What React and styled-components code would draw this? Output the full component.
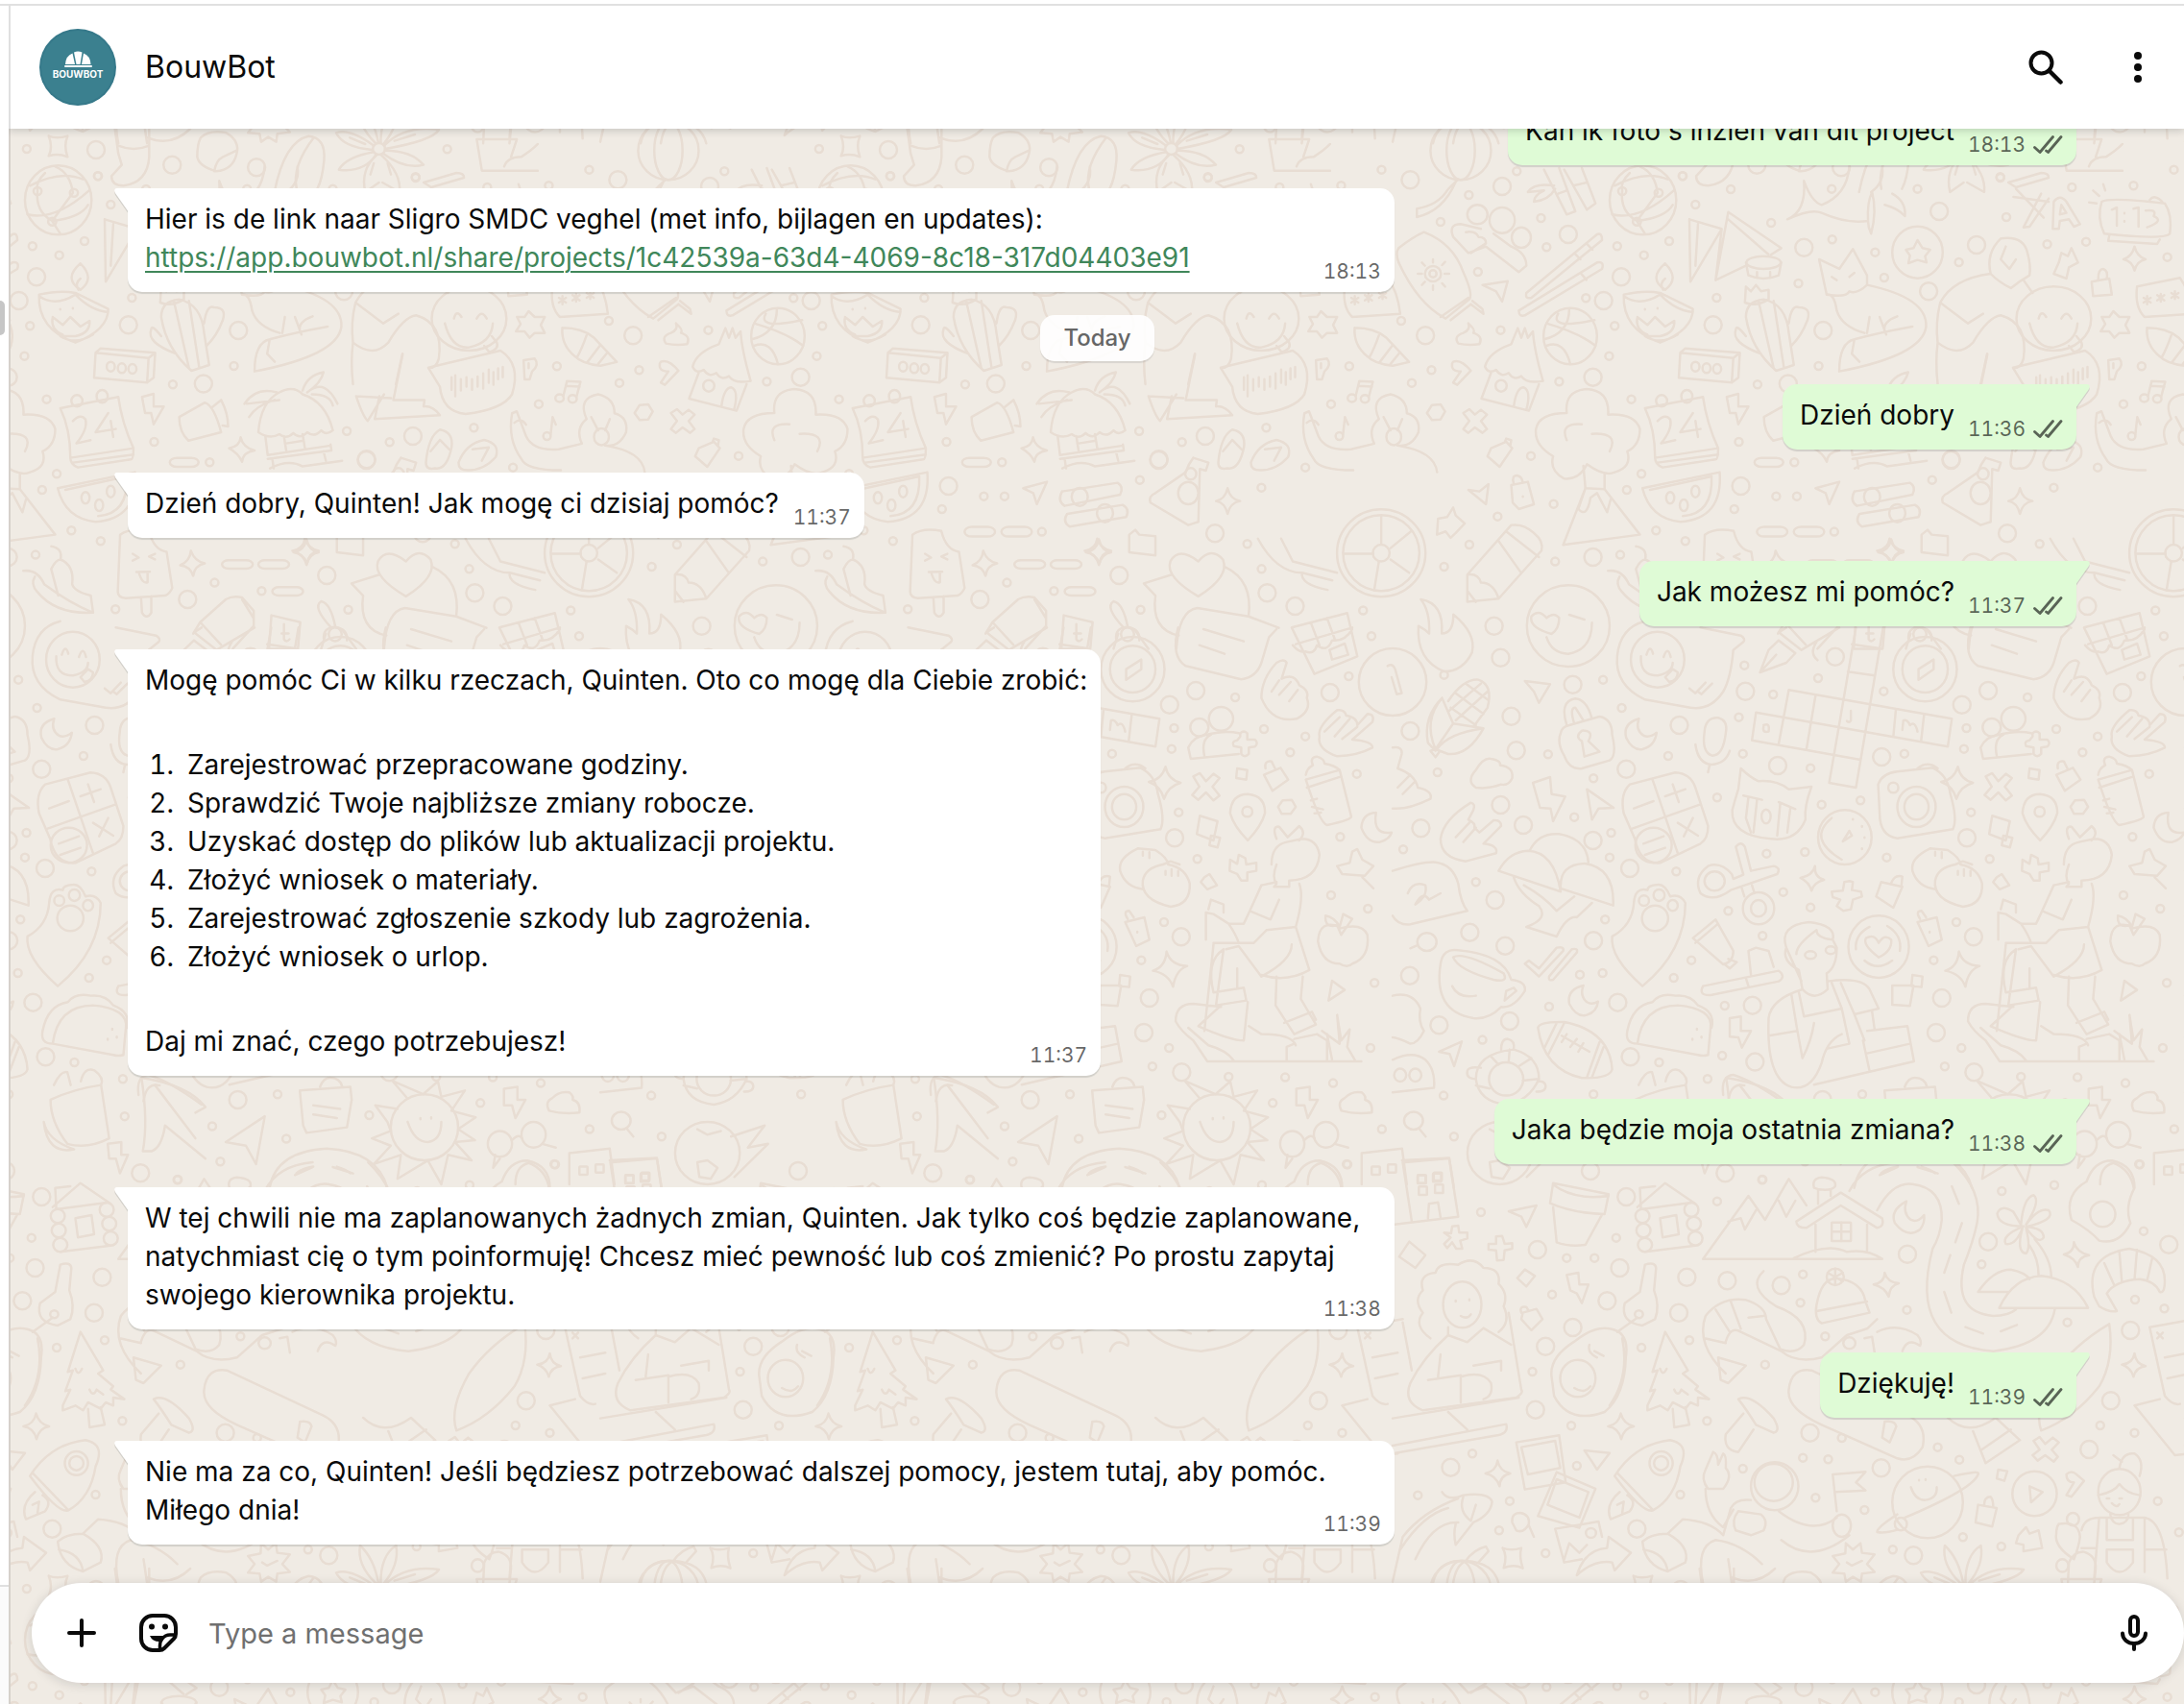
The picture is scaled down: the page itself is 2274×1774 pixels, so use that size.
import React from "react";
import styled, { createGlobalStyle, css } from "styled-components";

const GlobalStyle = createGlobalStyle`
  *, *::before, *::after { box-sizing: border-box; }
  body {
    margin: 0;
    background: #ffffff;
    color: #0a0a0a;
    font-family: Inter, "Noto Sans", sans-serif;
  }
  button, input { font: inherit; color: inherit; }
`;

/* ---------- page frame ---------- */

const Page = styled.div`
  display: flex;
  flex-direction: column;
  height: 100vh;
  overflow: hidden;
`;

const TopEdge = styled.div`
  flex: none;
  height: 6px;
  border-bottom: 2px solid #e0e0e0;
`;

const Columns = styled.div`
  flex: 1;
  min-height: 0;
  display: flex;
`;

const Sidebar = styled.aside`
  flex: none;
  width: 9px;
  display: flex;
  flex-direction: column;
  justify-content: space-between;
  padding-top: 307px;
`;

const ScrollThumb = styled.div`
  width: 5px;
  height: 36px;
  border-radius: 0 5px 5px 0;
  background: #c6c6c6;
`;

const SidebarFooter = styled.div`
  height: 124px;
  border-top: 2px solid #e0e0e0;
  background: #fbfbfb;
`;

const Chat = styled.main`
  position: relative;
  flex: 1;
  min-width: 0;
  display: flex;
  flex-direction: column;
  border-left: 2px solid #d6d1cb;
  background: #f0ebe4;
`;

const Wallpaper = styled.svg`
  position: absolute;
  inset: 0;
  width: 100%;
  height: 100%;
  fill: none;
  stroke: #e8ddd3;
  stroke-width: 2.5;
  stroke-linecap: round;
  stroke-linejoin: round;

  path, ellipse, rect { vector-effect: non-scaling-stroke; }
`;

/* ---------- header ---------- */

const Header = styled.header`
  position: relative;
  z-index: 2;
  flex: none;
  height: 128px;
  display: flex;
  align-items: center;
  gap: 30px;
  margin-left: -2px;
  padding: 0 8px 0 30px;
  border-left: 2px solid #e0e0e0;
  background: #ffffff;
  box-shadow: 0 2px 8px rgba(11, 20, 26, 0.18);
  clip-path: inset(0 0 -16px 0);
`;

const Title = styled.h1`
  flex: 1;
  margin: 0;
  font-size: 32px;
  line-height: 40px;
  font-weight: 400;
`;

const Actions = styled.div`
  display: flex;
  gap: 16px;
`;

const IconButton = styled.button`
  flex: none;
  width: 80px;
  height: 80px;
  display: flex;
  align-items: center;
  justify-content: center;
  padding: 0;
  border: 0;
  border-radius: 50%;
  background: transparent;
`;

const AvatarText = styled.text`
  fill: #ffffff;
  font-size: 10px;
  font-weight: 700;
  text-anchor: middle;
`;

/* ---------- conversation ---------- */

const Conversation = styled.section`
  position: relative;
  flex: 1;
  min-height: 0;
  overflow: hidden;
  display: flex;
  flex-direction: column;
  justify-content: flex-end;
  gap: 24px;
  padding: 0 112px 40px 122px;
`;

const DayPill = styled.div`
  flex: none;
  align-self: center;
  height: 48px;
  margin-right: -10px;
  margin-left: -20px;
  padding: 0 24px;
  border-radius: 15px;
  background: rgba(255, 255, 255, 0.9);
  box-shadow: 0 2px 1px rgba(11, 20, 26, 0.1);
  color: #666666;
  font-size: 24px;
  line-height: 48px;
  font-weight: 500;
`;

const Bubble = styled.article`
  position: relative;
  flex: none;
  max-width: 65%;
  padding: 12px 14px 16px 18px;
  border-radius: 15px;
  font-size: 28px;
  line-height: 40px;
  box-shadow: 0 2px 1px rgba(11, 20, 26, 0.13);
  ${(p) =>
    p.$out
      ? css`
          align-self: flex-end;
          background: #dffbd6;
          border-top-right-radius: 0;
        `
      : css`
          align-self: flex-start;
          background: #ffffff;
          border-top-left-radius: 0;
        `}
`;

const TailShape = styled.svg`
  position: absolute;
  top: 0;
  width: 14px;
  height: 26px;
  ${(p) =>
    p.$out
      ? css`
          left: 100%;
          fill: #dffbd6;
          transform: scaleX(-1);
        `
      : css`
          right: 100%;
          fill: #ffffff;
        `}
`;

const Line = styled.p`
  margin: 0;
`;

const MetaSpace = styled.span`
  display: inline-block;
  width: ${(p) => (p.$out ? 113 : 75)}px;
`;

const Meta = styled.footer`
  display: flex;
  justify-content: flex-end;
  align-items: center;
  gap: 8px;
  height: 30px;
  margin: -20px 0 -10px;
  color: rgba(0, 0, 0, 0.6);
  font-size: 21px;
  line-height: 30px;
  font-variant-numeric: tabular-nums;
`;

const Link = styled.a`
  color: #40875a;
  text-decoration: underline;
  text-decoration-thickness: 2px;
  text-underline-offset: 4px;
`;

const Steps = styled.ol`
  margin: 48px 0;
  padding: 0;
  list-style: none;
  counter-reset: step;
`;

const Step = styled.li`
  display: flex;
  gap: 14px;
  counter-increment: step;

  &::before {
    content: counter(step) ".";
    width: 30px;
    text-align: right;
    font-variant-numeric: tabular-nums;
  }
`;

/* ---------- composer ---------- */

const Composer = styled.form`
  position: relative;
  z-index: 1;
  flex: none;
  height: 104px;
  margin: 0 0 22px 22px;
  padding: 0 12px;
  display: flex;
  align-items: center;
  border-radius: 52px;
  background: #ffffff;
  box-shadow: 0 2px 12px rgba(11, 20, 26, 0.14);
`;

const MessageInput = styled.input`
  flex: 1;
  min-width: 0;
  height: 60px;
  padding: 0 12px;
  border: 0;
  outline: 0;
  background: transparent;
  font-size: 29px;

  &::placeholder { color: #707070; opacity: 1; }
`;

/* ---------- icons ---------- */

const Avatar = () => (
  <svg width="80" height="80" viewBox="0 0 80 80" role="img" aria-label="BouwBot logo">
    <circle cx="40" cy="40" r="40" fill="#36798a" />
    <circle cx="40" cy="40" r="38" fill="#3b808f" />
    <g fill="#ffffff">
      <path d="M27 37Q27.500 28 34.500 25.500L37 37Z" />
      <path d="M36 24.500Q40 22.500 44.500 24.500L42.500 37H38.500Z" />
      <path d="M53.500 37Q53 28 46 25.500L44 37Z" />
      <rect x="26" y="38" width="29" height="2" rx="1" />
    </g>
    <AvatarText x="40" y="51">BOUWBOT</AvatarText>
  </svg>
);

const SearchIcon = () => (
  <svg width="36" height="36" viewBox="0 0 36 36" fill="none" stroke="#0a0a0a" strokeWidth="4">
    <circle cx="13.500" cy="13.500" r="11" />
    <path d="M21.500 21.500L33.500 33.500" strokeWidth="4.500" strokeLinecap="round" />
  </svg>
);

const MenuIcon = () => (
  <svg width="8" height="32" viewBox="0 0 8 32" fill="#0a0a0a">
    <circle cx="4" cy="4" r="4" />
    <circle cx="4" cy="16" r="4" />
    <circle cx="4" cy="28" r="4" />
  </svg>
);

const PlusIcon = () => (
  <svg width="30" height="30" viewBox="0 0 30 30" stroke="#0a0a0a" strokeWidth="4" strokeLinecap="round">
    <path d="M15 2V28M2 15H28" />
  </svg>
);

const StickerIcon = () => (
  <svg width="40" height="40" viewBox="0 0 40 40" fill="none" stroke="#0a0a0a" strokeWidth="4" strokeLinejoin="round">
    <path d="M14 2H26A12 12 0 0 1 38 14V21Q38 24 36 26L26 36Q24 38 21 38H14A12 12 0 0 1 2 26V14A12 12 0 0 1 14 2Z" />
    <path d="M38 22H32Q27 22 24 26Q21.500 29 21.500 33V38" strokeWidth="3.500" />
    <path d="M11 23H26L21 29Q13.500 29 11 23Z" fill="#0a0a0a" stroke="none" />
    <circle cx="13" cy="13.500" r="3" fill="#0a0a0a" stroke="none" />
    <circle cx="27" cy="13.500" r="3" fill="#0a0a0a" stroke="none" />
  </svg>
);

const MicIcon = () => (
  <svg width="28" height="38" viewBox="0 0 28 38" fill="none" stroke="#0a0a0a" strokeWidth="4">
    <rect x="10" y="2" width="8" height="20" rx="4" />
    <path d="M2 19.500A12 10.500 0 0 0 26 19.500" strokeLinecap="round" />
    <path d="M14 30V36" strokeLinecap="round" />
  </svg>
);

const ChecksIcon = () => (
  <svg width="31" height="20" viewBox="0 0 31 20" fill="none" stroke="currentColor" strokeWidth="2.800" strokeLinecap="round" strokeLinejoin="round" role="img" aria-label="Delivered">
    <path d="M1.500 12.500L7 17.500L20.500 1.500" />
    <path d="M13.500 16L15.500 17.500L29 1.500" />
  </svg>
);

const Tail = ({ out }) => (
  <TailShape $out={out} viewBox="0 0 14 26" aria-hidden="true">
    <path d="M14 3V25.500L1 7Q-1 3 3 2Z" fill="rgba(11,20,26,0.13)" />
    <path d="M14 0V23.500L1 5Q-1 0 3 0Z" />
  </TailShape>
);

/* ---------- wallpaper drawings ----------
   Each sheet has its own scale; `big` and `small` are the loose rings,
   `rings` are ellipses that belong to a drawing: [cx, cy, rx, ry]. */

const sheets = [
  {
    at: "translate(1450 130) scale(.5255 .3333)",
    sx: 0.5255,
    sy: 0.3333,
    big: [[35,172],[217,192],[348,342],[453,475],[418,549],[65,658],[397,788],[815,383],[635,625],[853,642],[1062,520],[1157,375],[1083,270],[1218,1276],[690,1128],[397,1350],[1107,1045]],
    small: [[246,145],[151,219],[95,303],[294,291],[305,382],[169,459],[383,541],[17,612],[214,641],[77,766],[38,806],[330,802],[429,722],[440,628],[445,379],[548,363],[600,249],[575,160],[670,201],[498,407],[750,306],[870,200],[871,358],[956,398],[1040,200],[1204,163],[1216,288],[1297,373],[1374,365],[1346,195],[1468,190],[1535,413],[1548,140],[1122,429],[974,477],[804,495],[642,540],[844,753],[723,811],[473,857],[686,990],[796,1054],[493,1090],[464,1140],[319,1184],[274,1034],[208,1223],[152,1311],[102,1380],[322,1364],[522,1267],[580,1300],[451,1343],[677,1200],[760,1160],[801,1160],[875,1271],[1069,1109],[1310,1133],[1282,1309],[1397,1070],[1448,872],[1484,754]],
    rings: [[135,80,60,92],[135,80,28,92],[168,280,20,30],[217,298,25,40],[255,352,19,32],[80,465,16,24],[80,465,7,11],[496,235,66,108],[735,430,34,20],[1040,398,50,81],[1310,605,74,100],[600,755,8,15],[622,760,8,15],[643,762,8,15],[352,660,53,88],[215,815,11,18],[533,862,11,18],[583,848,11,20],[550,1165,8,18],[577,1188,8,18],[600,1145,8,18],[950,1162,16,28],[1000,1213,16,28],[1165,1150,20,35],[1170,1090,11,18],[484,302,8,12],[455,207,8,12],[527,212,8,12]],
    boxes: [[717,1040,57,28],[722,1256,60,30],[795,1256,60,30]],
    lines: [
      "M130 170Q110 200 108 205Q90 250 48 262V288Q100 270 125 178",
      "M120 350Q110 310 135 310L175 325M120 350L150 400L185 380L250 460L265 440Q265 400 235 380L200 340M145 335Q165 330 170 350Q185 350 185 370L155 400",
      "M12 385Q40 350 62 335Q120 370 140 460Q160 530 152 545L105 605Q50 560 12 430Q5 400 12 385ZM95 600L150 540M115 610L155 560L180 590L178 575L158 550",
      "M80 420V430M80 502V515M50 465H58M103 465H112M58 430L64 440M98 495L104 505M58 500L64 490M98 438L104 428",
      "M265 525L405 342Q415 335 415 360L275 540Q262 545 265 525ZM250 580L405 430Q420 425 415 450L262 595Q250 600 250 580ZM360 400L372 420M384 370L396 390M372 462L384 484",
      "M300 140L345 280L362 270L330 135M340 140L385 265L402 245L375 135M320 190Q280 180 268 210L300 205Q280 220 280 240Q310 235 322 200M328 215L345 205M358 190L385 180",
      "M440 190Q500 140 545 170M435 280Q490 300 557 205M455 205Q450 270 484 300Q540 290 555 250M470 150Q450 180 455 205M484 300L500 340M525 212Q520 150 490 130M525 212L484 300",
      "M588 295L590 490L652 325L588 295M605 310L600 440M640 485L665 272L770 385L750 405M640 485L700 440M652 325L640 485M665 295L745 405",
      "M700 430L705 470Q735 490 765 470L770 430M722 460V478M748 460V478",
      "M782 295Q820 270 815 175Q830 240 850 250Q900 220 905 130M782 295Q830 260 850 275Q900 310 942 300Q940 240 950 210Q960 270 948 340Q942 320 942 300M975 250Q1000 260 1015 285Q1018 240 990 215M948 210Q975 180 970 130",
      "M1040 360L1050 385L1065 390L1055 410L1058 430L1040 422L1022 432L1025 408L1017 390L1032 385Z",
      "M845 420L860 530Q875 525 880 580Q890 630 935 650M845 420L885 450L912 388L940 470L940 500Q1060 540 1057 630Q1050 720 885 770Q885 680 915 670Q960 650 1030 630M860 530Q900 540 905 520Q920 530 940 500M945 600L940 650M965 600L978 655M1000 598Q970 615 975 645M870 475L880 485M905 475L915 462M915 670L910 715L925 740",
      "M1085 555Q1110 480 1185 465Q1175 400 1205 355Q1250 345 1258 400Q1265 440 1262 470Q1240 490 1225 510Q1200 490 1185 465M1250 485L1268 525M1085 555L1140 620L1170 590M1085 555Q1075 620 1080 680Q1120 730 1150 680Q1180 600 1205 595Q1260 620 1250 730Q1245 760 1230 760M1080 680Q1075 740 1080 810M1178 715L1165 810M1215 380L1205 420L1222 450L1235 420",
      "M1280 605Q1285 575 1295 600M1325 605Q1335 575 1345 605M1262 620Q1275 700 1310 695Q1355 680 1357 620M1340 690L1350 710Q1370 700 1365 680L1355 660",
      "M458 530Q500 515 530 525L595 575Q595 640 530 680Q455 640 458 530ZM458 535Q490 570 530 530Q560 580 595 585M540 433Q570 480 540 515Q505 480 540 433M540 480Q528 495 536 515M485 600Q480 640 505 655M485 600L505 625L520 600L540 630L558 612Q560 650 530 660H505M500 660Q530 690 565 655M500 575V577M525 572V574",
      "M700 600Q700 550 735 545Q780 560 785 650L795 750L760 768Q710 700 700 600M785 620Q790 560 805 570Q830 570 822 610Q810 660 790 690M700 660Q680 620 680 640Q670 680 730 715M700 505L698 555Q720 570 745 545L745 515L730 520L720 500L710 520ZM725 550L755 760M755 550L775 755",
      "M570 712L580 698L688 712L685 790L672 805L567 790ZM570 712L675 728L688 712M675 728L672 805",
      "M305 620Q370 650 402 690M328 590Q310 640 400 610M300 670Q350 650 350 575M305 690Q340 670 352 747",
      "M183 755Q190 710 235 685L248 635L255 665L262 635L268 665L278 645Q280 700 298 800M183 755Q190 780 205 765Q215 790 230 775Q240 800 255 785Q265 810 298 800M195 775L176 855L270 893L290 810M240 880Q245 820 260 820Q275 830 265 890",
      "M150 620Q165 640 160 650Q180 660 172 685Q150 690 130 683Q120 660 140 650Q155 640 150 620",
      "M178 500L228 488L217 552L205 520Z",
      "M120 740Q135 730 155 768L128 812L120 805L135 770Q115 770 118 745Z",
      "M78 875L95 873L104 895L95 920L78 922L68 900Z",
      "M140 900L152 888L163 905L175 890L187 905L175 925L187 950L178 962L163 945L150 962L140 950L152 925Z",
      "M195 1010L225 990L237 1010L212 1068L188 1035ZM222 992L225 980L235 985L233 1003",
      "M235 1125L268 1115L280 1185L250 1200L238 1180ZM240 1120Q235 1095 247 1095Q258 1100 257 1118M258 1160V1162",
      "M150 1140L172 1145L190 1122L185 1185Z",
      "M90 1230L108 1225L120 1195L125 1220L143 1245L125 1275L115 1290L105 1270L88 1280Z",
      "M345 900Q340 830 385 825Q430 830 427 905Q480 900 490 950Q490 1000 465 1020Q475 1070 440 1085Q420 1100 385 1060Q370 1110 340 1105Q310 1080 318 1035Q280 1000 284 950Q290 900 345 900M345 985Q330 930 375 935M430 1020Q450 960 395 965M378 1065L382 1135L420 1138V1090",
      "M382 1135L338 1312L490 1280L420 1138M382 1135L368 1200Q385 1230 392 1165L405 1150L425 1210L432 1170",
      "M500 885L615 850Q622 930 645 1010Q645 1045 640 1045L535 1070Q520 1060 520 1040Q520 950 500 885M520 1040L645 1010M525 1055L645 1030",
      "M525 925Q540 900 550 920Q555 950 532 995L560 985M595 900L570 960L610 950M600 925L605 975",
      "M495 1135L648 1085Q655 1230 570 1240Q510 1230 495 1135ZM510 1140L632 1098Q635 1215 575 1222",
      "M662 850L685 840V880H705L685 935L680 900H668Z",
      "M838 1135L885 1115L865 1185L858 1150Z",
      "M915 1145L1025 1118Q1038 1130 1030 1155L920 1190Q905 1175 915 1145M925 1215L1035 1187Q1050 1200 1042 1225L930 1255Q915 1240 925 1215",
      "M1175 1040L1205 1055L1200 1080L1188 1075L1185 1240L1165 1250L1090 1180Q1085 1160 1100 1150L1160 1085Q1165 1060 1175 1040",
      "M1243 1135Q1248 1170 1268 1175Q1248 1180 1243 1215Q1238 1180 1220 1175Q1238 1170 1243 1135",
      "M988 1295Q993 1330 1012 1335Q993 1340 988 1375Q983 1340 962 1335Q983 1330 988 1295",
      "M1470 380Q1475 412 1492 420Q1475 425 1470 455Q1465 425 1448 420Q1465 412 1470 380",
      "M1048 1280L1060 1265L1068 1280L1100 1285V1345L1048 1335Z",
      "M148 1405L235 1250Q260 1245 280 1275Q300 1300 295 1330L210 1480L148 1490ZM148 1405Q170 1400 175 1430Q200 1430 210 1480M225 1270L290 1350M210 1300L255 1400M148 1455L165 1490",
      "M1405 240Q1420 225 1530 245Q1545 280 1540 340Q1530 360 1410 340Q1395 290 1405 240M1420 345L1418 362L1515 372L1520 358M1395 245L1380 242M1400 222L1388 205M1412 205L1408 185M1500 235Q1510 215 1525 240",
      "M1425 265L1435 258V315M1450 275V277M1450 300V302M1468 262L1478 258V318M1492 268Q1515 262 1508 285Q1530 300 1495 320",
      "M1220 180L1285 150Q1300 150 1300 165L1235 195ZM1230 225L1300 240M1285 215L1250 320L1262 318L1300 230M1235 200L1290 290",
      "M1308 325L1310 240Q1322 215 1335 240L1362 310L1350 318L1340 295L1322 300L1320 325ZM1325 250L1335 275L1322 280Z",
      "M1385 490L1420 480L1425 530L1388 535ZM1398 483Q1398 450 1408 450Q1418 455 1415 480",
      "M1320 430L1325 400L1338 410L1345 385L1358 430L1340 445L1335 480L1310 465Z",
      "M1475 505L1560 478Q1580 520 1585 590L1490 600Q1470 570 1475 505M1495 535V560M1488 540L1502 555M1502 540L1488 555M1522 528V552M1515 532L1529 548M1529 532L1515 548M1550 520V544M1543 525L1557 540M1557 525L1543 540",
      "M1405 600L1420 600L1428 582L1440 600L1460 600L1452 625L1460 650L1440 650L1430 665L1420 645L1403 645L1412 622Z",
      "M1418 735L1440 730Q1450 750 1435 770L1430 795H1420ZM1428 745V760",
    ],
  },
  {
    at: "translate(1450 640) scale(.5255 .3333)",
    sx: 0.5255,
    sy: 0.3333,
    big: [[201,35],[214,134],[357,218],[235,317],[35,363],[245,424],[463,482],[214,594],[259,657],[56,667],[397,705],[470,792],[203,891],[153,992],[223,1034],[398,1018],[34,1127],[92,1282],[232,1269],[446,1211],[471,1381],[713,1220],[718,1397],[699,239],[568,345],[763,471],[969,444],[877,131],[1180,237],[1128,281],[1446,243],[1138,697],[1151,1006],[1088,1197],[1077,1305],[1152,1429]],
    small: [[102,188],[417,203],[454,291],[308,436],[89,492],[398,511],[360,632],[433,681],[430,758],[21,733],[165,835],[546,441],[421,952],[371,1124],[416,1119],[310,1224],[178,1328],[101,1502],[398,1498],[528,1398],[557,1134],[562,802],[643,571],[697,158],[754,249],[686,320],[694,434],[828,479],[843,198],[973,239],[1014,434],[1132,419],[1137,354],[1258,258],[1315,357],[1397,380],[1483,192],[1528,67],[1499,497],[1367,430],[1146,617],[1466,694],[1183,763],[979,758],[927,580],[850,593],[817,741],[741,746],[665,925],[774,866],[828,914],[733,1003],[592,1079],[658,1221],[653,1377],[624,1450],[1072,1079],[1117,960],[1127,1353],[1094,1411],[1245,1443],[1357,1445],[1452,1463],[1526,1353],[1534,1150],[1448,876],[1521,918]],
    rings: [[348,35,82,127],[525,140,53,87],[0,210,67,105],[1055,170,63,101],[1055,170,45,73],[1187,352,18,28],[1230,325,24,37],[517,720,36,55],[740,630,9,22],[896,695,53,85],[1038,600,38,63],[1038,600,24,40],[992,540,10,16],[1282,615,10,16],[520,948,26,40],[528,876,11,18],[498,893,10,16],[555,908,10,17],[638,832,20,30],[725,917,31,50],[725,917,15,26],[68,1022,19,28],[828,1063,11,12],[868,1048,10,12],[963,1037,60,97],[15,1438,12,20],[45,1438,12,20],[225,1450,34,52]],
    lines: [
      "M305 70Q315 120 348 122Q395 110 395 25M315 60Q270 40 275 5Q290 -20 305 10Q320 -10 330 10Q330 45 315 60M380 15L350 0",
      "M610 40L690 65Q700 75 695 85L675 110Q670 200 655 240Q630 300 590 290L500 265Q440 220 445 130Q450 40 500 20M492 130Q490 190 525 190Q555 180 555 150M503 125Q510 90 516 122M537 132Q545 95 551 132M540 195L555 170L565 180Q565 205 548 210ZM588 230L600 245L620 212M605 240L612 248L633 215",
      "M-10 160Q0 150 5 170L18 245L8 248L-2 195",
      "M98 260L120 340L180 355Q150 440 110 435L85 420L75 425L85 445L92 430M98 260Q60 320 70 400L85 425M98 260Q60 330 85 420M120 340L85 420M180 355Q110 370 88 420M110 270Q140 200 170 203Q200 220 188 290L160 350M125 245L180 310M145 215L188 265M115 290L165 345M188 240L125 330M175 215L112 300",
      "M262 207L312 217L290 275L280 240Z",
      "M333 370Q335 350 350 345L410 318Q435 325 435 375Q445 440 430 455L375 480Q350 485 340 440Q325 400 333 370M345 345Q330 270 362 262Q385 265 395 325M360 340Q350 290 362 290L378 330M375 395Q360 380 375 362Q400 360 388 395L410 428L380 443Z",
      "M488 325Q455 340 463 385Q475 425 495 420Q520 410 523 368Q510 385 498 378Q480 360 488 325",
      "M618 365Q620 320 645 322Q665 330 660 370Q655 440 633 440Q612 430 618 365M600 405Q605 465 632 468Q660 465 668 425M628 470L625 492",
      "M728 180L745 110L765 80L798 120L780 150ZM728 180L760 125M765 55L810 110L885 40M765 55L780 40M840 85Q825 120 842 142",
      "M712 392L720 305L1100 412L1108 325L785 235L765 403M712 392L925 452M838 252L820 420M997 298L992 382M1053 312L1047 396M972 40L918 540L865 525L918 40M910 92L965 105M902 178L955 190M735 345Q748 335 745 365Q732 370 735 350M908 300V330Q905 340 900 332M1010 360L1012 330Q1020 325 1025 345Q1035 330 1040 365",
      "M1072 140V170L1042 203V170ZM1022 75Q1020 40 1045 38Q1070 45 1068 80",
      "M1145 40Q1130 130 1160 160L1270 202Q1300 195 1310 150L1325 70L1340 45M1195 45L1275 83M1187 95L1237 122",
      "M1370 40L1480 -5L1500 130L1415 185ZM1378 92L1490 40M1372 95Q1385 120 1398 115Q1415 125 1420 95Q1440 120 1450 80Q1475 85 1490 45M1445 110L1475 90L1482 125L1450 140ZM1408 25L1425 95M1440 10L1455 75",
      "M1310 260Q1310 200 1340 150Q1355 135 1360 150L1350 200Q1375 180 1385 220Q1405 235 1400 260Q1410 300 1380 325Q1330 340 1310 260M1330 240L1345 205M1345 250L1368 210M1365 270L1382 235",
      "M1425 380Q1420 350 1460 298Q1475 295 1478 315Q1500 320 1500 345L1520 310Q1535 310 1530 335L1490 390Q1530 395 1530 415Q1500 440 1460 442Q1420 420 1425 380M1435 365L1465 320M1455 380L1485 325M1470 388L1500 350",
      "M1165 415Q1175 380 1200 375Q1240 360 1265 370M1165 415L1170 450L1265 435M1197 440Q1190 390 1210 375M1268 380V370Q1275 360 1282 370V390H1297Q1305 400 1297 412L1285 415V435Q1277 448 1270 435V415L1255 410Q1250 395 1262 392Z",
      "M1398 515L1465 485L1488 630Q1490 640 1440 657Q1425 650 1398 515M1400 540L1468 505M1398 500Q1400 480 1412 470Q1405 445 1420 443Q1435 450 1435 465Q1455 470 1465 485M1408 580L1420 575M1410 600L1432 608M1415 620L1428 618",
      "M165 485Q180 445 195 450Q215 455 213 470Q240 475 237 510Q230 535 215 530Q190 545 165 540Q145 520 165 485",
      "M278 525L312 507L315 560L342 568L318 645L313 605L292 603Z",
      "M385 545L438 603L408 605L395 640Z",
      "M95 700Q100 640 155 587Q165 590 160 610L150 640Q165 650 162 665L172 680L200 642Q215 640 215 660L180 715Q210 720 205 745L145 770Q95 760 95 700M125 695L155 645M140 710L165 665",
      "M0 415Q20 410 18 435L10 480Q45 500 50 540Q80 550 75 575Q30 610 0 605M10 540L35 500M20 560L45 520",
      "M458 620Q450 560 470 530L560 493Q590 495 600 540L625 660Q625 700 610 715L530 775Q490 780 480 700ZM515 515L565 745M475 668L610 592M497 715L537 692M500 750L540 728M478 605L517 582M540 567L580 545M555 530L567 585M565 650L605 690M595 635L577 692",
      "M690 480Q710 510 725 520Q760 515 785 545L830 537Q815 600 818 640Q800 710 750 700Q670 690 673 610Q680 570 685 545ZM695 565L732 578M765 585L798 607M705 570L700 635L710 680M722 578L715 680M768 590L762 690M788 605L782 680",
      "M905 675L892 708L910 690ZM870 635Q820 700 890 765M912 638V640M930 660V662M935 695V697M930 730V732",
      "M962 530Q970 495 1000 490L1070 478Q1100 500 1105 560Q1120 640 1110 670L1000 698Q965 690 965 620ZM1040 480Q1060 455 1080 480M1120 475Q1125 515 1150 525Q1125 535 1117 575Q1110 535 1087 522Q1112 515 1120 475",
      "M1175 505L1188 495L1200 520L1215 497L1227 510L1213 537L1227 565L1215 580L1200 555L1185 578L1173 563L1187 537Z",
      "M1262 480L1282 485L1280 515L1260 510ZM1315 500L1348 478L1363 515L1332 550ZM1318 480Q1315 455 1330 458L1337 480",
      "M1248 620Q1250 560 1283 560Q1318 565 1317 620Q1310 660 1283 705Q1255 660 1248 620",
      "M1352 580L1370 578L1378 600L1368 622H1350L1343 600Z",
      "M1188 628L1223 645L1215 705L1182 685ZM1210 690L1228 697L1223 727L1207 720Z",
      "M1537 618Q1510 620 1508 665Q1520 715 1545 710Q1565 700 1568 680Q1530 690 1537 618",
      "M210 800Q230 740 268 737Q320 740 333 865ZM333 855Q330 780 380 777Q440 790 437 908L333 855M272 735Q290 680 330 685Q385 700 388 775M240 820Q250 870 290 910Q310 950 265 975L325 1005Q345 940 365 945L395 900M260 845Q300 880 325 925L360 880",
      "M0 800Q60 770 85 773Q120 780 130 840Q135 900 148 925L35 967Q10 970 0 940M30 870Q40 830 65 845Q70 880 45 905Q60 860 72 890L95 870",
      "M435 1005Q430 1070 495 1160Q580 1050 580 900Q570 870 550 880Q540 840 525 843Q505 845 505 860Q480 850 478 900Q475 970 435 1005",
      "M680 725Q690 705 698 725L710 800L755 785Q770 790 762 810L670 860Q635 900 610 870Q595 820 625 785Q650 770 672 810L675 825L695 812ZM692 855L697 880M712 845L717 870",
      "M837 785Q835 820 855 828Q835 835 830 862Q825 835 808 822Q832 815 837 785",
      "M895 835L905 832L912 835L910 860L928 865L930 880L912 890L908 920L893 925L880 910L887 890L872 882L870 865L892 862Z",
      "M968 835L1010 850L992 915L958 880ZM988 838Q995 810 1010 818L1008 848",
      "M1065 730L1100 735Q1125 760 1125 780Q1160 790 1168 840Q1170 905 1130 912Q1070 890 1075 830Q1080 790 1115 780M1065 730Q1025 760 1030 800Q1040 850 1075 857M1115 780L1130 770L1148 780M1120 800V812M1132 795V815M1145 800V815M1075 740V752M1088 742V760",
      "M1197 820L1207 810L1222 845L1203 858L1190 835Z",
      "M1265 750L1278 760L1280 780L1300 775V800L1282 805V830H1270L1262 810L1247 800L1248 765L1262 778Z",
      "M1490 740L1500 732L1510 765L1532 785L1515 815L1470 810L1460 785L1485 775ZM1510 820L1532 855",
      "M1340 780Q1330 820 1340 840L1335 850H1365V830Q1420 830 1425 750Q1420 700 1390 700L1360 710Q1330 720 1330 780M1340 700Q1330 660 1345 662L1362 695L1385 660Q1400 680 1385 705M1310 845L1340 835M1310 845L1287 925L1328 952L1345 890M1385 840Q1395 880 1378 975L1320 985M1287 925L1275 965H1245M1320 985L1295 1025H1215M1245 965Q1260 1000 1265 1025M1200 1015V930L1215 935L1245 965M1205 920L1210 890L1235 905V930M1240 1045L1265 1035L1310 1130Q1370 1080 1370 1030M1378 975L1405 1110Q1360 1150 1310 1125",
      "M1215 1030L1197 1300M1235 1045Q1200 1080 1215 1180L1275 1165L1280 1205L1220 1220ZM1262 1165V1105M1230 1220L1185 1285Q1250 1330 1275 1330L1283 1210M1340 1130L1338 1220L1375 1310L1418 1280L1388 1200L1392 1130M1355 1275L1410 1240L1418 1265M1375 1325L1420 1310L1440 1330V1395H1360V1350L1375 1340M1140 1270Q1140 1215 1175 1215L1230 1225M1140 1270Q1150 1300 1175 1330L1203 1395H1508M1165 1290L1205 1345Q1240 1360 1255 1392M1285 1285L1310 1310Q1370 1310 1378 1345M1430 1300L1465 1340L1460 1250L1468 1330L1485 1295L1480 1350L1495 1390M1440 1310L1450 1390",
      "M1465 975Q1425 950 1422 1020Q1430 1090 1465 1090Q1480 1105 1490 1090Q1525 1070 1520 1000Q1510 960 1465 980M1465 975L1472 935L1490 950L1468 1000L1460 970Q1435 980 1437 940Q1455 945 1465 975",
      "M50 1032L35 1042",
      "M95 1090Q100 1040 130 1048Q220 1060 235 1140Q265 1145 262 1175Q240 1230 215 1225Q190 1265 160 1260Q80 1240 95 1090M120 1070Q140 1050 220 1120Q230 1150 200 1140Q130 1110 120 1070M118 1160Q130 1200 165 1190M225 1175L240 1165L245 1175L222 1205Z",
      "M262 1090L270 1080L290 1105L325 1040Q340 1035 338 1050L290 1130ZM310 1130L355 1045Q368 1040 365 1055L318 1140Q308 1145 310 1130",
      "M378 1158Q345 1170 350 1215Q365 1260 385 1250Q405 1240 407 1208Q395 1220 385 1210Q370 1190 378 1158",
      "M595 1010L640 952L675 1050Q675 1085 655 1092ZM600 1025L645 965M665 1075L682 1085L668 1105L658 1092",
      "M615 1160L765 1112Q780 1130 765 1145L630 1188Q605 1190 615 1160M700 1135L705 1160M710 1125L705 1050L720 1040L745 1050L755 1100",
      "M780 1040Q765 970 825 960Q880 970 872 1015L880 1040Q880 1100 860 1120L862 1170Q835 1210 812 1170L805 1110Q770 1080 780 1040M800 1060Q800 1030 840 985Q840 1010 872 1015M780 1040L810 1145M812 1170Q750 1200 745 1260Q740 1450 790 1475Q830 1490 850 1400Q860 1330 890 1310M745 1315L802 1300L790 1185M802 1300L812 1385Q830 1330 835 1275M815 1255L890 1230L905 1340L862 1355M815 1255L805 1180M862 1145Q930 1130 945 1170L963 1230L915 1248L888 1150M870 1150L890 1230M940 1300L1020 1285L1033 1395L835 1468M940 1370L1025 1340M950 1240L955 1295M932 1330L945 1425M915 1248L935 1330",
      "M963 1070Q930 1030 938 1010Q955 995 963 1025Q975 995 988 1015Q990 1050 963 1070M918 1045Q915 1000 945 975M1005 1050Q1010 1000 980 972M935 1080Q960 1115 990 1080",
      "M1040 960L1078 945L1088 1015L1062 1035ZM1045 950Q1035 925 1048 925L1057 945M1064 990V992",
      "M1122 1052Q1130 1095 1163 1097Q1140 1110 1135 1162Q1125 1120 1095 1112Q1120 1100 1122 1052",
      "M990 1158H1032L1025 1222L990 1218ZM1030 1125L1050 1130L1048 1163L1028 1160Z",
      "M485 1340Q495 1220 565 1220Q635 1230 630 1290L625 1375Q615 1380 605 1375ZM485 1340Q460 1340 465 1300Q475 1220 515 1210Q530 1180 560 1190Q590 1185 605 1220Q640 1240 632 1290M603 1293V1296M594 1325V1328M612 1318V1321",
      "M288 1290Q290 1270 340 1272Q430 1300 435 1420Q430 1450 375 1447Q300 1420 288 1290M325 1275L300 1355M340 1275L308 1375M410 1335L385 1445M418 1350L395 1445M335 1315L390 1365M345 1310L335 1335M365 1325L352 1350M378 1338L368 1365",
      "M668 1260L690 1255V1300H710L692 1352L685 1320L668 1318Z",
      "M0 1390Q40 1360 65 1390Q85 1420 82 1478L0 1492",
      "M92 1365L137 1333L122 1410L113 1372Z",
      "M0 1190Q40 1175 55 1230Q50 1270 62 1300Q50 1340 35 1340Q10 1320 0 1320",
      "M165 1450Q165 1370 240 1358Q290 1380 290 1450Q270 1520 225 1530Q170 1520 165 1450M232 1358L230 1395M195 1380L210 1405M275 1385L250 1410M288 1450L258 1455M165 1470L192 1480M215 1360Q215 1325 228 1325Q243 1330 240 1358M165 1450Q145 1450 148 1425Q150 1410 175 1415M285 1490Q305 1490 303 1470Q300 1455 288 1458",
      "M1450 1143L1475 1172L1443 1205Z",
      "M655 1500Q650 1440 675 1437Q720 1460 780 1530M665 1520Q670 1460 697 1470",
    ],
  },
  {
    at: "translate(1450 1200) scale(.5255 .3333)",
    sx: 0.5255,
    sy: 0.3333,
    big: [[392,57],[463,138],[659,64],[287,303],[450,360],[425,463],[567,500],[357,546],[303,605],[283,803],[115,983],[484,1175],[583,389],[663,400],[770,415],[1020,317],[1180,278],[1462,555],[1538,287],[1423,775],[1380,927],[827,875],[968,985],[1032,1258]],
    small: [[175,186],[443,266],[643,152],[732,85],[345,329],[400,329],[316,443],[588,586],[493,609],[277,684],[738,662],[354,853],[158,940],[365,978],[50,1070],[232,1088],[211,1180],[303,1251],[570,1068],[694,987],[838,1078],[935,1116],[813,380],[808,469],[857,574],[1019,491],[1207,120],[1311,101],[1479,36],[1167,349],[1488,245],[1471,459],[1529,487],[1337,530],[1402,852],[1470,875],[1080,920],[1123,959],[863,958],[813,953],[890,891],[623,838],[1130,1201],[991,1240],[1206,1230],[1516,1088],[1558,1186]],
    rings: [[495,198,14,22],[497,243,14,22],[500,288,14,22],[592,178,14,22],[597,222,14,22],[600,268,14,22],[1407,192,25,40],[138,475,38,72],[488,505,8,12],[367,705,35,58],[905,595,12,18],[877,388,17,26],[393,1188,10,15],[532,970,23,37],[532,970,14,22],[757,1042,47,75],[755,1030,38,58],[890,1165,18,35],[1060,1092,70,112],[1007,1160,12,20],[1272,1065,44,70],[1440,1060,42,72],[1348,1145,12,20],[1327,1290,12,20]],
    boxes: [[50,70,16,26],[80,65,16,26],[52,106,16,26],[84,100,16,26],[870,218,38,58]],
    lines: [
      "M25 30L112 18L130 200L0 225M38 215L20 30M70 205L72 160L90 155L95 203",
      "M318 95L428 130L420 192Q360 190 312 158ZM318 170L325 280Q350 295 382 288L415 193M318 100Q360 150 428 135",
      "M230 183L285 165L265 232L255 200Z",
      "M485 170L540 95L600 160M492 175L490 110L520 105M495 176L592 156M500 310L600 290M530 205L562 195L567 255L535 265Z",
      "M615 332L705 135L738 210L785 82L820 165M665 215L690 205L698 240L720 180M765 150L780 200L798 150M615 332H970M800 215L888 125L970 205Q975 230 960 235L888 165L820 235Q800 235 800 215M838 225V310M940 225V310M889 218V276M870 247H908M795 330Q860 280 900 310Q940 300 970 332M835 110Q830 80 850 77Q880 80 877 105Q870 120 845 115ZM843 115V160M868 115V135",
      "M1018 152Q985 180 995 220Q1020 270 1045 240Q1055 220 1053 195Q1040 220 1027 210Q1010 190 1018 152",
      "M905 120Q930 40 1000 30M960 180Q990 90 1030 98Q1090 110 1088 210Q1085 260 1070 300Q1020 600 1190 620Q1300 600 1312 490M1110 30Q1170 120 1158 220Q1150 280 1132 350Q1110 500 1190 510Q1220 510 1235 490M1108 105L1122 160M1128 220L1115 280M1105 320L1093 375M1093 435L1107 500M1135 545L1170 565M1205 558L1237 538M965 70L1000 45M1040 45L1080 65",
      "M1250 230Q1200 230 1198 190Q1205 160 1230 185L1245 225Q1250 140 1270 133Q1285 150 1255 225Q1280 170 1300 180Q1315 210 1255 232Q1290 235 1290 265Q1280 290 1255 235Q1265 300 1255 315Q1235 310 1248 235Q1235 290 1215 285Q1205 260 1250 230M1262 290Q1280 330 1280 385M1272 270Q1305 330 1305 388M1202 485Q1230 390 1285 385Q1350 395 1378 485ZM1160 435Q1190 365 1225 365Q1255 375 1262 395M1160 435H1222",
      "M1375 90Q1390 25 1425 25Q1470 40 1470 110Q1450 170 1462 220Q1440 290 1400 275Q1380 240 1345 210Q1330 130 1375 90",
      "M1390 450Q1370 320 1460 300Q1530 320 1530 400Q1530 440 1520 435Q1510 400 1480 395Q1430 400 1415 440L1435 495Q1420 500 1400 480ZM1440 310L1445 405M1475 303L1470 395M1410 345L1430 415M1505 330L1495 400",
      "M1350 280Q1355 312 1380 320Q1358 325 1358 357Q1352 328 1330 318Q1350 312 1350 280",
      "M975 375Q980 405 1003 408Q985 415 983 450Q975 420 953 412Q975 405 975 375",
      "M452 815Q458 848 478 855Q458 860 453 895Q448 860 427 855Q448 848 452 815",
      "M208 962Q212 995 233 1002Q213 1008 212 1042Q205 1008 184 1002Q205 995 208 962",
      "M1470 627Q1472 660 1492 667Q1473 670 1468 700Q1463 672 1445 662Q1467 658 1470 627",
      "M118 230L130 228L132 250L148 250V268L134 275L138 300H126L118 280L108 298L102 285L115 265L102 250L116 252Z",
      "M33 278L65 320L45 360L13 325Z",
      "M205 262L217 260L222 285L237 283V300L222 305L220 335L207 337L205 305L190 303V285H205Z",
      "M262 365L282 385L265 418L247 392Z",
      "M345 382L368 375L370 412H388L375 470L365 440L352 430Z",
      "M258 500L285 488L297 520L275 555L255 520ZM255 500Q250 478 265 482L270 495",
      "M75 580Q40 540 60 500Q40 460 60 430Q50 380 85 375Q90 340 130 350Q160 320 180 360Q215 360 210 410Q230 440 220 480Q235 530 210 560M125 462V465M152 458V461M135 510Q148 522 155 505M110 545V570L148 592L180 548L235 600M110 570Q60 640 35 720Q20 780 60 805L245 765Q260 750 255 740L230 500M20 530L38 680M95 630L90 700M160 665L215 650V680M70 710L135 695V780M135 700Q180 680 195 720Q200 760 180 770",
      "M0 830L250 765M110 810L148 865M0 915L225 848Q230 875 210 882L0 940",
      "M500 350Q520 340 522 360L518 430Q530 480 520 520L495 540Q450 530 460 470L490 435ZM485 515L445 560",
      "M315 700Q310 640 360 590Q400 540 430 550Q470 560 462 640Q460 760 420 810Q350 850 320 760ZM360 735Q380 755 392 730M455 580Q470 700 430 790M390 600Q385 625 405 640M400 620L418 635",
      "M540 560L585 680L575 690L605 730L600 740L627 770L605 765V790L590 780L580 800L555 780L545 805L530 790L505 805V790L520 740L510 745L525 680L515 685ZM555 800L558 858L588 850L580 795M530 675Q535 700 543 675M558 740Q565 765 572 740L585 755",
      "M660 690Q600 600 620 510Q650 450 700 460Q740 480 740 520L770 620L690 560Q670 540 660 590M645 640L700 665L665 720L650 710ZM735 370Q700 420 760 480Q830 520 815 600Q800 630 770 615M770 620Q800 660 850 640L900 570L940 550L960 520M640 490L668 560M670 465L690 550M618 580L660 595M705 515L735 510",
      "M840 475Q850 390 880 393Q930 400 937 465L945 500L850 533Q835 520 840 475M840 495L940 465M877 362V412M862 375L892 402M892 375L862 402",
      "M935 580L950 575L955 625M960 560Q1000 530 1040 570Q1050 590 1045 603Q1020 575 1010 620",
      "M1420 535Q1430 650 1400 730Q1350 830 1285 868Q1270 800 1310 690Q1350 600 1420 535",
      "M1590 520L1500 545L1530 760Q1545 790 1560 785M1530 640L1580 625M1535 705L1580 690M1515 562L1526 580M1526 562L1515 580M1470 790L1520 770M1470 790L1550 945L1580 940",
      "M685 770Q710 750 755 830Q770 870 755 875L720 850Q700 800 685 770M695 815L660 880Q655 930 685 935L715 865",
      "M785 740Q790 670 830 680L1020 820Q1060 850 1050 920Q1030 970 1000 955L850 850Q780 800 785 740M970 890L975 840Q995 835 998 855L985 905Z",
      "M1100 828Q1140 890 1195 828L1243 898L1175 970L1150 870M1165 930L1225 865",
      "M1270 900L1282 888L1293 910L1308 890L1320 905L1306 928L1318 950L1310 965L1293 945L1278 962L1268 945L1282 928Z",
      "M245 905L330 883L343 1030L262 1052ZM255 920L322 900L332 985L268 1005ZM325 998L402 1050L370 1172L288 1135ZM325 1020L388 1060L370 1140L307 1100Z",
      "M380 930L430 938L405 990L395 965Z",
      "M322 1175L408 1152L415 1200M322 1175L340 1280L375 1270M340 1270L350 1220L370 1250L385 1225",
      "M365 1320Q380 1240 425 1235L428 1200L472 1250L440 1305L435 1280Q400 1270 365 1320",
      "M440 1010Q480 910 550 898Q590 910 570 980Q560 1080 515 1118Q495 1125 440 1010M445 1000L515 1115M450 1060Q420 1100 432 1145L470 1120Q485 1090 465 1070M445 1100L458 1090L455 1125",
      "M270 1165L280 1200M237 1155Q235 1125 253 1125Q272 1130 270 1160Q260 1190 245 1180Z",
      "M495 1215Q510 1190 545 1190L575 1145Q630 1150 655 1195L670 1110Q680 1080 710 1085M545 1190Q590 1230 580 1280L545 1308Q500 1290 495 1215M497 1240Q540 1250 545 1308",
      "M625 1050Q610 1020 620 990L635 935Q645 940 645 975L655 940Q662 945 660 985Q675 1010 655 1050ZM620 1050Q620 1130 655 1170L675 1115M685 1120L730 1130Q745 1150 735 1180L710 1195L680 1180Q670 1150 685 1120M765 1120Q830 1200 880 1140M615 1345Q600 1230 640 1210Q690 1220 732 1285M770 1210Q830 1290 905 1195M665 1270L672 1345",
      "M872 1005L937 997L918 1030L937 1055L877 1060M872 1005L880 1120",
      "M1112 1010Q1165 990 1160 1005Q1150 1050 1015 1140M1000 1130Q960 1170 960 1185Q975 1190 1000 1178M1027 1045Q1035 1085 1055 1085Q1080 1080 1078 1045M1043 1022V1024M1056 1020V1022",
      "M1262 1042L1288 1060L1265 1092Z",
      "M1200 990L1218 995L1212 1025L1197 1018Z",
      "M1160 1100L1197 1110L1188 1168L1155 1155ZM1172 1100Q1172 1075 1185 1075Q1190 1085 1190 1105",
      "M1335 1005Q1345 990 1355 1005L1370 1025L1345 1075L1335 1070L1350 1030Q1335 1030 1335 1005",
      "M1240 1195L1255 1170L1262 1190L1280 1180L1287 1235L1250 1245V1225L1235 1220Z",
      "M1398 1070Q1430 1060 1440 1035Q1455 1065 1480 1070M1440 985Q1445 935 1470 940Q1490 960 1480 1010M1428 945L1445 965M1422 1130Q1425 1160 1440 1160Q1458 1155 1458 1130M1400 1140Q1370 1140 1365 1180M1400 1140H1490Q1530 1150 1535 1330M1400 1140L1390 1330M1415 1140V1210H1467V1140M1490 1145V1310M1415 1240H1467V1280Q1440 1340 1415 1280ZM1365 1235H1395M1490 1240H1533M1415 1080H1420M1440 1080H1445M1425 1095Q1435 1112 1440 1098",
      "M1320 1160Q1360 1150 1362 1200Q1360 1230 1350 1270Q1310 1230 1315 1190Q1315 1170 1320 1160M1338 1345L1340 1280Q1350 1245 1370 1247Q1395 1260 1393 1300L1390 1345",
      "M898 1220L912 1240L927 1220L930 1250L955 1255L940 1285L955 1310L930 1315L928 1340L912 1325L898 1340L895 1315L872 1312L885 1285L872 1260L897 1252ZM900 1280L910 1290L930 1275",
      "M98 1060Q110 1090 140 1070Q190 1060 197 1090Q195 1130 160 1155L125 1225Q120 1190 125 1160M130 1080Q60 1120 20 1200L0 1340M130 1155Q80 1150 45 1270M110 1110Q60 1130 15 1240M140 1075Q130 1120 155 1150L165 1100",
      "M80 1345Q90 1270 145 1275Q200 1280 210 1345M120 1345Q125 1290 145 1275M145 1275Q160 1240 185 1230L190 1245L170 1280",
      "M218 1235Q235 1245 255 1235Q250 1260 258 1298Q240 1285 220 1297Q228 1260 218 1235",
    ],
  },
  {
    at: "translate(1650 280) scale(.4847 .3954)",
    sx: 0.4847,
    sy: 0.3954,
    big: [[887,440],[787,503],[437,302],[403,870],[702,807],[1080,888],[1020,853]],
    small: [[745,427],[837,456],[1018,418],[461,826],[562,848],[248,896],[748,897],[1008,790],[1226,899]],
    rings: [[1202,340,9,10],[1230,342,9,10],[1175,440,8,10],[1292,442,16,22],[1265,748,95,115],[1265,748,82,100],[1265,748,18,22],[720,962,14,18]],
    boxes: [[477,767,66,22],[555,767,66,22],[585,838,66,22]],
    lines: [
      "M1208 155Q1250 155 1275 180L1325 245L1290 255Q1250 250 1235 230Q1205 200 1208 155M1260 175Q1250 210 1240 232M1290 200L1262 245M1305 220L1285 250",
      "M1210 335L1218 295L1247 297L1238 338M1216 308L1245 310M1183 435L1187 390L1194 410",
      "M385 390L440 352Q460 360 475 430L405 452Q385 430 385 390M455 365L475 345Q490 380 490 415L478 412",
      "M555 430Q560 350 600 325Q630 305 650 330Q700 350 715 425Q700 440 690 425Q675 445 660 430Q645 450 630 432Q615 450 600 435Q580 450 555 430ZM570 440L575 490L710 465M575 500L712 478L710 462M585 500L588 525M695 480L700 505M610 440L615 480M650 435L655 472M612 460L652 452M525 355Q550 310 595 325M530 355L600 345M535 390Q550 360 590 345M650 320Q660 280 695 272Q690 300 660 325M665 320Q700 290 725 355M670 330Q710 330 715 360M580 525Q620 500 650 520L735 505",
      "M765 335Q780 390 790 400L825 330M765 335L840 340M865 225L845 345M805 395L945 385Q930 360 910 362L912 345H845M815 335L805 395",
      "M920 260L1075 215Q1120 250 1100 330Q1080 370 1000 382Q950 375 945 310ZM970 285V318M978 280V335M990 290V320M1002 285V310M1014 290V318M1026 283V310M1038 275V315M1050 265V300M1060 272V305M1070 262V290M1080 258V285",
      "M1100 380L1110 375L1130 440Q1145 480 1200 475L1250 460Q1235 420 1260 395Q1240 340 1285 330Q1320 340 1320 380Q1350 390 1345 430Q1330 470 1300 465Q1380 480 1385 535M1100 380Q1090 450 1120 500Q1130 530 1205 530M1105 405Q1120 390 1130 410M1270 390L1285 425M1310 395L1300 425",
      "M915 510Q920 440 945 423Q975 430 970 470Q960 530 935 525Q915 530 915 510M925 480L945 450L965 475M985 510Q1000 460 1040 450Q1075 460 1065 495Q1040 530 1005 530Q985 530 985 510M1015 475L1050 470L1035 505",
      "M517 443Q522 470 547 478Q522 482 520 508Q512 485 492 472Q515 468 517 443",
      "M253 850L258 700Q280 680 320 690Q330 740 358 745L370 840Q365 855 355 860L270 867Q253 865 253 850M303 865L305 905Q315 925 325 905V862M285 750L298 760L285 768M333 750L320 757L333 765M293 798L322 797M298 798Q305 830 317 825V798",
      "M50 795Q80 790 95 830Q150 880 200 905Q120 910 80 850Q65 830 75 810M110 730Q135 735 130 765Q160 780 155 830Q160 850 195 860L200 905M110 790L125 860M110 790Q120 765 130 765",
      "M410 742Q418 770 440 775Q418 780 415 808Q408 782 387 780Q408 770 410 742",
      "M655 710Q662 738 685 742Q662 748 660 775Q652 750 628 742Q652 738 655 710",
      "M872 862Q800 810 812 770Q830 730 872 770Q900 730 925 765Q940 810 872 862M930 785Q990 820 980 915L1045 945M815 805L755 828L780 860Q770 950 830 965M825 1000Q830 900 870 893L980 915",
      "M1265 725V650M1285 735L1330 690M1285 765L1325 800M1260 770L1250 845M1248 750H1185M1000 710Q1040 800 1095 800L1160 820M1095 800Q1090 830 1150 845M1050 710L1075 770L1170 800",
      "M415 960L430 930L485 870Q500 860 520 865L545 900V940L500 1000M430 930L475 990M520 870L545 920",
      "M712 945Q670 890 690 875Q710 880 720 940M690 1000L700 960M735 950L765 1000",
      "M583 912L645 930L640 1000H578ZM605 960H620M610 935V975Q615 985 622 975",
      "M1350 870Q1400 880 1395 960Q1420 960 1420 910Q1470 960 1460 1010Q1440 1060 1400 1060Q1340 1030 1345 940Q1360 950 1368 960Q1370 900 1350 870",
    ],
  },
  {
    at: "translate(1650 0) scale(.3571 .3333)",
    sx: 0.3571,
    sy: 0.3333,
    big: [[280,468],[502,515],[748,523]],
    small: [[78,465],[285,550],[1304,466],[1212,555]],
    rings: [[1105,465,18,18]],
    lines: [
      "M142 425Q165 435 197 425Q185 455 197 490Q170 478 142 487Q155 460 142 425",
      "M335 402Q340 440 345 480L355 515L325 550Q325 580 360 580Q430 570 435 490V402M345 455Q390 475 435 455M430 430Q500 460 555 402",
      "M585 430Q610 405 660 415Q700 440 690 480Q680 530 630 535Q580 520 575 490Q575 450 585 430M690 470Q660 485 650 490Q630 500 625 535",
      "M800 600Q830 440 900 425Q950 430 945 500Q940 560 925 590M865 590Q850 520 915 430",
      "M1090 455Q1020 400 980 415Q1000 460 1085 468M1090 475Q1010 490 988 530Q1060 540 1095 485M1098 485Q1050 530 1065 600L1105 570M1112 485Q1170 540 1165 600L1115 570M1122 470Q1200 470 1235 515Q1180 530 1118 480M1120 455Q1180 390 1280 405Q1260 440 1122 465M1095 447Q1040 390 1050 330Q1090 370 1103 445M1110 447Q1110 360 1155 330Q1165 390 1118 450M1020 430L1065 450M1150 440L1210 420M1090 510L1080 545M1130 510L1140 545",
      "M1390 435H1507L1490 490M1390 435L1405 533H1568M1470 520Q1480 490 1520 490Q1550 470 1568 450",
    ],
  },
  {
    at: "translate(1650 900) scale(.7015 .3827)",
    sx: 0.7015,
    sy: 0.3827,
    big: [[353,640]],
    small: [[412,625],[548,682],[315,712],[425,746],[713,649],[875,720],[824,816],[982,740],[264,857],[327,808],[185,685]],
    rings: [[630,715,50,90],[742,760,18,35],[792,735,18,35],[922,697,14,24],[1050,785,48,85]],
    boxes: [[860,822,12,22],[884,816,12,22],[928,845,12,22],[952,838,12,22]],
    lines: [
      "M605 637L582 588L628 625L650 590L655 632L690 615L670 670L706 688L680 720L705 750L675 755L700 805L665 790L655 870L635 805L590 855L595 790L555 815L580 765L552 745L580 725L575 700L557 655L590 665M605 700Q615 755 635 755Q655 750 655 700M624 690V693M640 688V691",
      "M445 615L520 605L522 640L515 715L455 730L450 710ZM465 655L505 665M465 680L500 690M475 605Q480 580 490 580Q505 580 508 605",
      "M748 610L768 605V640H780L765 690L760 655H748Z",
      "M820 635Q830 615 845 620Q852 630 850 640Q862 645 860 675Q835 680 815 670Q808 645 820 635",
      "M760 750Q770 730 775 745M735 790L732 825L742 800M805 760L825 770M930 718L940 740",
      "M335 755L393 685L380 815L365 765Z",
      "M210 580Q220 700 212 780L225 780Q240 770 245 710L305 800M210 580Q280 600 305 660L290 675M230 600L290 745",
      "M75 640Q110 610 150 600L162 745Q130 775 100 760Q75 700 75 640M65 700Q70 750 110 775Q70 790 65 700M80 600Q90 560 100 565L105 600M120 590Q125 550 140 560Q155 580 150 600",
      "M400 880Q410 780 485 773Q560 780 575 880M440 840Q450 825 465 822M500 822Q515 830 520 840",
      "M765 870Q765 820 785 812Q810 830 815 880",
      "M845 870V785L905 773L912 870M905 805L975 798L982 880",
      "M1035 810L1050 805L1065 825L1055 855L1038 850ZM1085 740L1135 710L1110 770L1140 760L1090 850M1035 720L1050 735L1070 725",
      "M160 760L180 755V790H190L178 840L172 800H162Z",
    ],
  },
];

const Doodles = ({ sheet }) => (
  <g transform={sheet.at}>
    {sheet.big.map(([x, y]) => (
      <ellipse key={`b${x}-${y}`} cx={x} cy={y} rx={9 / sheet.sx} ry={9 / sheet.sy} />
    ))}
    {sheet.small.map(([x, y]) => (
      <ellipse key={`s${x}-${y}`} cx={x} cy={y} rx={4 / sheet.sx} ry={4 / sheet.sy} />
    ))}
    {sheet.rings.map(([cx, cy, rx, ry]) => (
      <ellipse key={`r${cx}-${cy}-${rx}`} cx={cx} cy={cy} rx={rx} ry={ry} />
    ))}
    {(sheet.boxes || []).map(([x, y, w, h]) => (
      <rect key={`x${x}-${y}`} x={x} y={y} width={w} height={h} rx={w > 50 ? 14 : 1} />
    ))}
    {sheet.lines.map((d) => (
      <path key={d} d={d} />
    ))}
  </g>
);

const ChatWallpaper = () => (
  <Wallpaper aria-hidden="true">
    <defs>
      <g id="doodles">
        {sheets.map((sheet) => (
          <Doodles key={sheet.at} sheet={sheet} />
        ))}
      </g>
      <pattern id="wall" patternUnits="userSpaceOnUse" x="-11" y="-6" width="825" height="1499">
        <use href="#doodles" x="-1650" y="0" />
        <use href="#doodles" x="-825" y="0" />
        <use href="#doodles" x="-1650" y="-1499" />
        <use href="#doodles" x="-825" y="-1499" />
      </pattern>
    </defs>
    <rect width="100%" height="100%" fill="url(#wall)" stroke="none" />
  </Wallpaper>
);

/* ---------- messages ---------- */

const Message = ({ out, time, lead, children }) => (
  <Bubble $out={out}>
    <Tail out={out} />
    {lead}
    <Line>
      {children}
      <MetaSpace $out={out} />
    </Line>
    <Meta>
      <time>{time}</time>
      {out && <ChecksIcon />}
    </Meta>
  </Bubble>
);

const steps = [
  "Zarejestrować przepracowane godziny.",
  "Sprawdzić Twoje najbliższe zmiany robocze.",
  "Uzyskać dostęp do plików lub aktualizacji projektu.",
  "Złożyć wniosek o materiały.",
  "Zarejestrować zgłoszenie szkody lub zagrożenia.",
  "Złożyć wniosek o urlop.",
];

export default function App() {
  return (
    <>
      <GlobalStyle />
      <Page>
        <TopEdge />
        <Columns>
          <Sidebar>
            <ScrollThumb />
            <SidebarFooter />
          </Sidebar>
          <Chat>
            <ChatWallpaper />
            <Header>
              <Avatar />
              <Title>BouwBot</Title>
              <Actions>
                <IconButton type="button" aria-label="Search">
                  <SearchIcon />
                </IconButton>
                <IconButton type="button" aria-label="Menu">
                  <MenuIcon />
                </IconButton>
              </Actions>
            </Header>

            <Conversation>
              <Message out time="18:13">Kan ik foto's inzien van dit project</Message>
              <Message time="18:13">
                Hier is de link naar Sligro SMDC veghel (met info, bijlagen en updates):{" "}
                <Link href="https://app.bouwbot.nl/share/projects/1c42539a-63d4-4069-8c18-317d04403e91">
                  https://app.bouwbot.nl/share/projects/1c42539a-63d4-4069-8c18-317d04403e91
                </Link>
              </Message>
              <DayPill>Today</DayPill>
              <Message out time="11:36">Dzień dobry</Message>
              <Message time="11:37">Dzień dobry, Quinten! Jak mogę ci dzisiaj pomóc?</Message>
              <Message out time="11:37">Jak możesz mi pomóc?</Message>
              <Message
                time="11:37"
                lead={
                  <>
                    <Line>Mogę pomóc Ci w kilku rzeczach, Quinten. Oto co mogę dla Ciebie zrobić:</Line>
                    <Steps>
                      {steps.map((step) => (
                        <Step key={step}>{step}</Step>
                      ))}
                    </Steps>
                  </>
                }
              >
                Daj mi znać, czego potrzebujesz!
              </Message>
              <Message out time="11:38">Jaka będzie moja ostatnia zmiana?</Message>
              <Message time="11:38">
                W tej chwili nie ma zaplanowanych żadnych zmian, Quinten. Jak tylko coś będzie
                zaplanowane, natychmiast cię o tym poinformuję! Chcesz mieć pewność lub coś zmienić?
                Po prostu zapytaj swojego kierownika projektu.
              </Message>
              <Message out time="11:39">Dziękuję!</Message>
              <Message time="11:39">
                Nie ma za co, Quinten! Jeśli będziesz potrzebować dalszej pomocy, jestem tutaj, aby
                pomóc. Miłego dnia!
              </Message>
            </Conversation>

            <Composer onSubmit={(e) => e.preventDefault()}>
              <IconButton type="button" aria-label="Attach">
                <PlusIcon />
              </IconButton>
              <IconButton type="button" aria-label="Stickers">
                <StickerIcon />
              </IconButton>
              <MessageInput type="text" placeholder="Type a message" aria-label="Type a message" />
              <IconButton type="button" aria-label="Record voice message">
                <MicIcon />
              </IconButton>
            </Composer>
          </Chat>
        </Columns>
      </Page>
    </>
  );
}
